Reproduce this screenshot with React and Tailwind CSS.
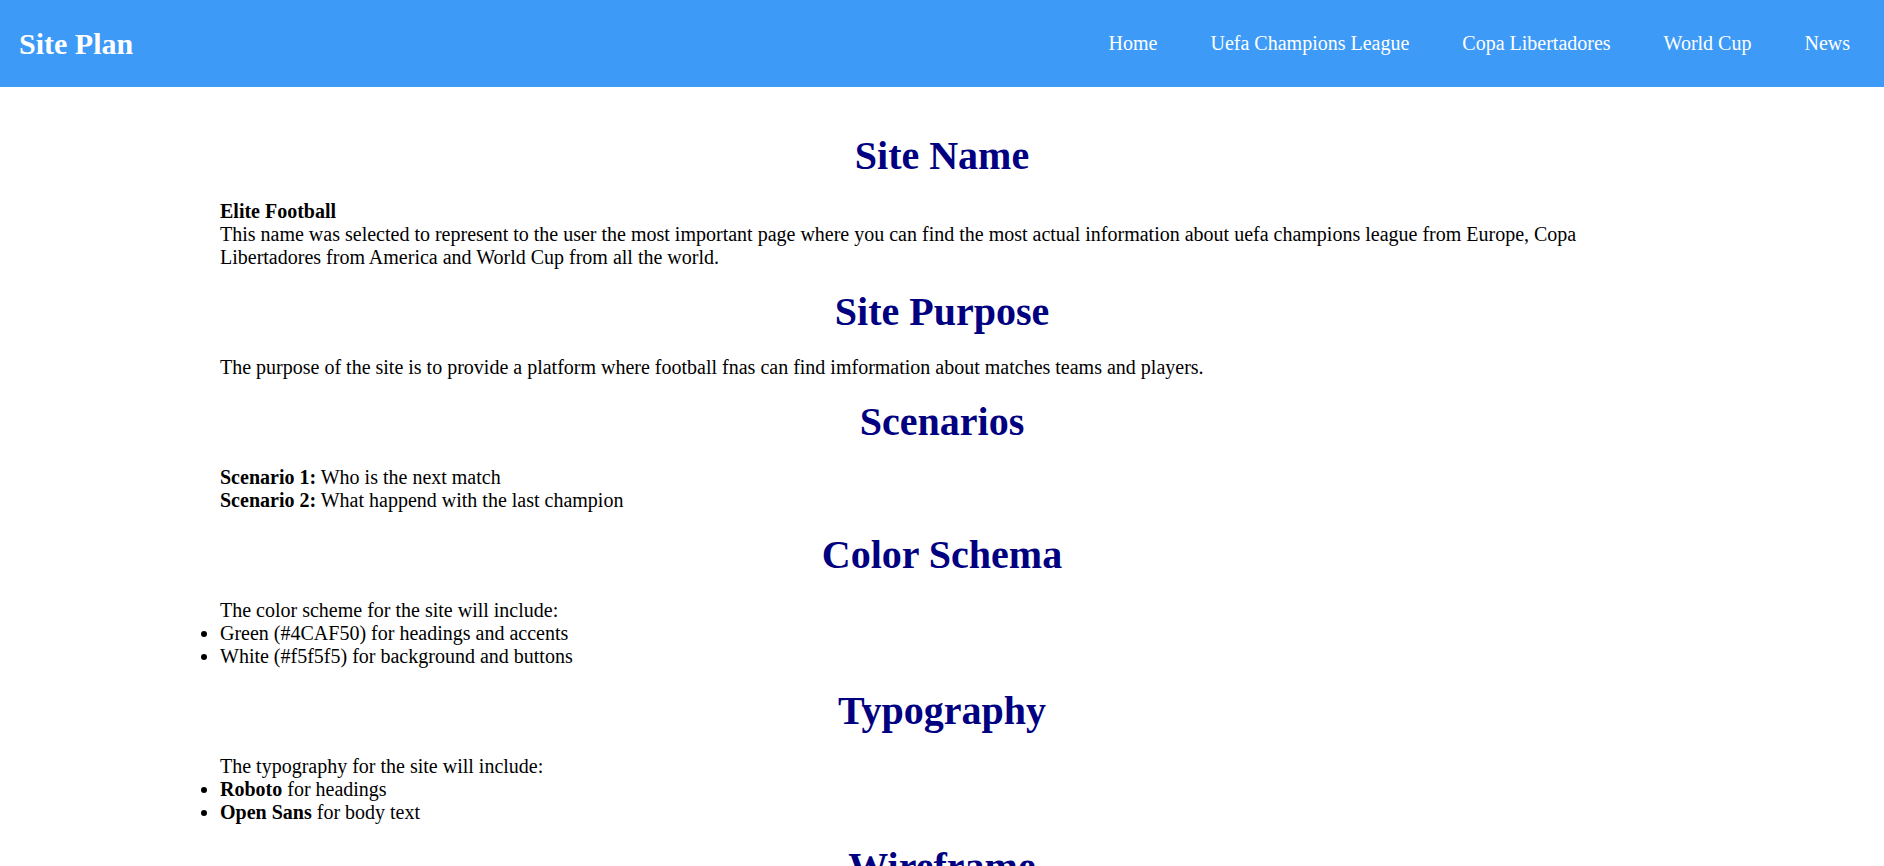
const navLinks = [
  { label: "Home", href: "#home" },
  { label: "Uefa Champions League", href: "#ucl" },
  { label: "Copa Libertadores", href: "#libertadores" },
  { label: "World Cup", href: "#worldcup" },
  { label: "News", href: "#news" },
];

const Heading = ({ children }) => (
  <h2 className="my-[20.5px] text-center text-[40px] leading-[46px] font-bold text-[#000080]">
    {children}
  </h2>
);

const App = () => {
  return (
    <div className="min-h-screen bg-white font-['Liberation_Serif','Times_New_Roman',serif] text-[20px] leading-[23px] text-black">
      <header className="flex h-[87px] items-center justify-between bg-[#3d9af7] pl-[19px] pr-[34px]">
        <h1 className="-mt-[1px] text-[30px] leading-[35px] font-bold text-white">Site Plan</h1>
        <nav>
          <ul className="flex gap-[53px]">
            {navLinks.map((link) => (
              <li key={link.label}>
                <a href={link.href} className="text-white">
                  {link.label}
                </a>
              </li>
            ))}
          </ul>
        </nav>
      </header>

      <main className="mx-[220px] pt-[25.5px]">
        <section>
          <Heading>Site Name</Heading>
          <p>
            <strong>Elite Football</strong>
            <br />
            This name was selected to represent to the user the most important page where you can find the most actual information about uefa champions league from Europe, Copa Libertadores from America and World Cup from all the world.
          </p>
        </section>

        <section>
          <Heading>Site Purpose</Heading>
          <p>
            The purpose of the site is to provide a platform where football fnas can find imformation about matches teams and players.
          </p>
        </section>

        <section>
          <Heading>Scenarios</Heading>
          <p>
            <strong>Scenario 1:</strong> Who is the next match
            <br />
            <strong>Scenario 2:</strong> What happend with the last champion
          </p>
        </section>

        <section>
          <Heading>Color Schema</Heading>
          <p>The color scheme for the site will include:</p>
          <ul className="list-disc">
            <li>Green (#4CAF50) for headings and accents</li>
            <li>White (#f5f5f5) for background and buttons</li>
          </ul>
        </section>

        <section>
          <Heading>Typography</Heading>
          <p>The typography for the site will include:</p>
          <ul className="list-disc">
            <li>
              <strong>Roboto</strong> for headings
            </li>
            <li>
              <strong>Open Sans</strong> for body text
            </li>
          </ul>
        </section>

        <section>
          <Heading>Wireframe</Heading>
        </section>
      </main>
    </div>
  );
};

export default App;
